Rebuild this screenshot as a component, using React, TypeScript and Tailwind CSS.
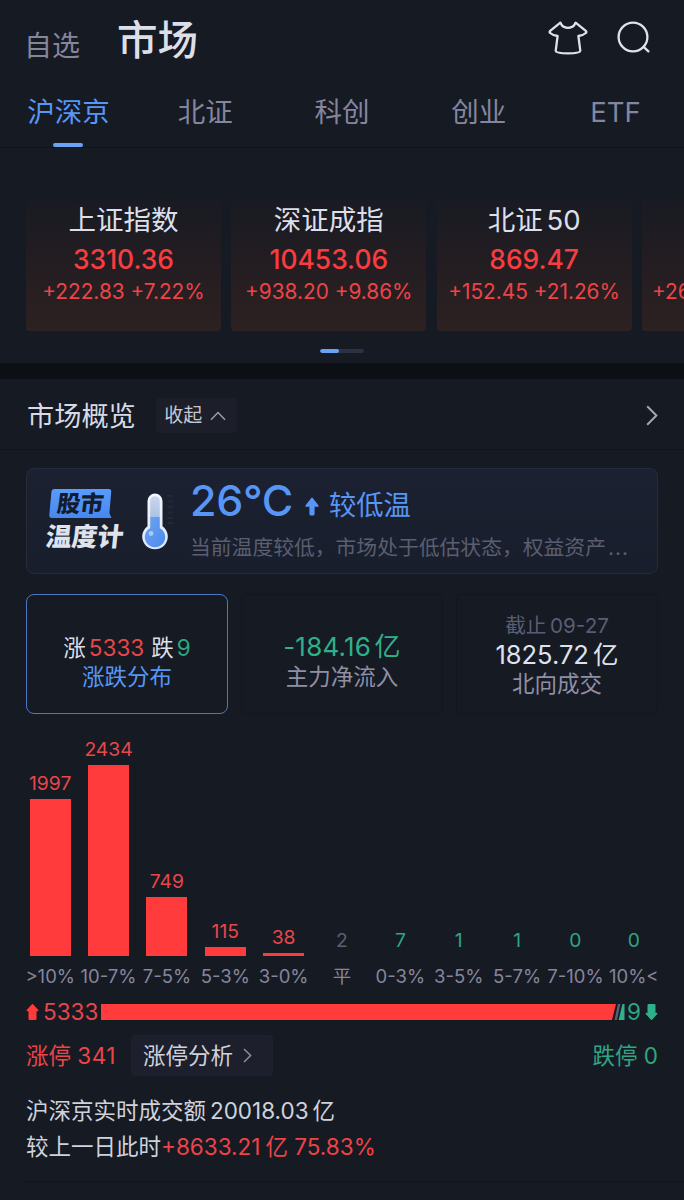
const tabs = ['沪深京', '北证', '科创', '创业', 'ETF'];

const indices = [
  { name: '上证指数', value: '3310.36', change: '+222.83', percent: '+7.22%' },
  { name: '深证成指', value: '10453.06', change: '+938.20', percent: '+9.86%' },
  { name: '北证 50', value: '869.47', change: '+152.45', percent: '+21.26%' },
  { name: '', value: '', change: '+26', percent: '' }
];

const distribution = [
  { range: '>10%', count: 1997, height: 157, color: 'text-[#e8464a]' },
  { range: '10-7%', count: 2434, height: 191, color: 'text-[#e8464a]' },
  { range: '7-5%', count: 749, height: 59, color: 'text-[#e8464a]' },
  { range: '5-3%', count: 115, height: 9, color: 'text-[#e8464a]' },
  { range: '3-0%', count: 38, height: 3, color: 'text-[#e8464a]' },
  { range: '平', count: 2, height: 0, color: 'text-[#5d5f74]' },
  { range: '0-3%', count: 7, height: 0, color: 'text-[#2fa583]' },
  { range: '3-5%', count: 1, height: 0, color: 'text-[#2fa583]' },
  { range: '5-7%', count: 1, height: 0, color: 'text-[#2fa583]' },
  { range: '7-10%', count: 0, height: 0, color: 'text-[#2fa583]' },
  { range: '10%<', count: 0, height: 0, color: 'text-[#2fa583]' }
];

function ShirtIcon() {
  return (
    <svg width="40" height="36" viewBox="0 0 40 36" fill="none" stroke="#dfe2ea" strokeWidth="2.3" strokeLinejoin="round" strokeLinecap="round">
      <path d="M12.4 2.6 L2.2 10.8 Q1 12 2.2 13 Q4.6 15.2 9.6 16 L7.7 30.8 Q8 33.2 20 33.4 Q32 33.2 32.3 30.8 L30.4 16 Q35.4 15.2 37.8 13 Q39 12 37.8 10.8 L27.6 2.6 L26.2 5.2 Q24.6 7.8 20 7.8 Q15.4 7.8 13.8 5.2 Z" />
    </svg>
  );
}

function SearchIcon() {
  return (
    <svg width="34" height="34" viewBox="0 0 34 34" fill="none" stroke="#dfe2ea" strokeWidth="2.3" strokeLinecap="round">
      <circle cx="16" cy="17" r="14.4" />
      <path d="M26.6 26.8 L31.4 31.4" />
    </svg>
  );
}

function Thermometer() {
  return (
    <svg width="38" height="60" viewBox="0 0 38 60" fill="none">
      <defs>
        <linearGradient id="glass" x1="0" y1="0" x2="0" y2="1">
          <stop offset="0" stopColor="#f4f7fd" />
          <stop offset="1" stopColor="#dbe7fb" />
        </linearGradient>
        <linearGradient id="tube" x1="0" y1="0" x2="0" y2="1">
          <stop offset="0" stopColor="#c9d6ee" />
          <stop offset="1" stopColor="#9fb6de" />
        </linearGradient>
        <linearGradient id="liquid" x1="0" y1="0" x2="1" y2="1">
          <stop offset="0" stopColor="#6da4f3" />
          <stop offset="1" stopColor="#4c8bec" />
        </linearGradient>
      </defs>
      <path d="M27 4 H33 M28 9.5 H33 M27 15 H33 M28 20.5 H33 M27 26 H33 M28 31 H33" stroke="#242937" strokeWidth="1.8" />
      <path d="M7.5 9 a7.5 7.5 0 0 1 15 0 V34.2 a12.8 12.8 0 1 1 -15 0 Z" fill="url(#glass)" />
      <path d="M10.2 9 a4.8 4.8 0 0 1 9.6 0 V36 H10.2 Z" fill="url(#tube)" />
      <path d="M10.4 25 H19.6 V36 a10.2 10.2 0 1 1 -9.2 0 Z" fill="url(#liquid)" />
      <circle cx="11" cy="41.5" r="2.4" fill="#a9cbfb" />
    </svg>
  );
}

function ArrowUp({ className }: { className: string }) {
  return (
    <svg className={className} viewBox="0 0 14 18" fill="currentColor">
      <path d="M6.3 .4 Q7 -.2 7.7 .4 L13.6 8 Q14 9.2 12.8 9.2 H9.6 V16.6 Q9.6 18 8.4 18 H5.6 Q4.4 18 4.4 16.6 V9.2 H1.2 Q0 9.2 .4 8 Z" />
    </svg>
  );
}

function BlockArrow({ className }: { className: string }) {
  return (
    <svg className={className} viewBox="0 0 12 16" fill="currentColor">
      <path d="M5.4 .3 Q6 -.2 6.6 .3 L11.8 6 Q12.3 7 11.2 7.2 H10 V14.8 Q10 16 8.8 16 H3.2 Q2 16 2 14.8 V7.2 H.8 Q-.3 7 .2 6 Z" />
    </svg>
  );
}

function Header() {
  return (
    <header className="flex h-[78px] pl-[24px] pr-[33px]">
      <span className="mt-[30px] text-[28px] leading-8 text-[#85859c]">自选</span>
      <h1 className="ml-[37px] mt-[17px] text-[40.5px] font-medium leading-[48px] text-[#dcdfe8]">市场</h1>
      <div className="ml-auto mt-[20px] flex gap-[29px]">
        <ShirtIcon />
        <SearchIcon />
      </div>
    </header>
  );
}

function Tabs() {
  return (
    <nav className="grid h-[70px] grid-cols-5 border-b border-[#10141b]">
      {tabs.map((tab, index) => (
        <div key={tab} className="flex flex-col items-center">
          <span className={index === 0 ? 'mt-[16px] text-[27.5px] leading-9 text-[#5896f5]' : 'mt-[16px] text-[27.5px] leading-9 text-[#85859f]'}>
            {tab}
          </span>
          {index === 0 && <span className="mt-[13px] h-1 w-[30px] rounded-sm bg-[#6aa2f5]" />}
        </div>
      ))}
    </nav>
  );
}

function IndexCards() {
  return (
    <section className="h-[215px] overflow-hidden pt-[47px]">
      <div className="flex gap-[10.3px] pl-[26px]">
        {indices.map((item, index) => (
          <div
            key={index}
            className="flex h-[136px] w-[195px] shrink-0 flex-col items-center whitespace-nowrap rounded bg-linear-to-b from-[#181a23] via-[#231d21] to-[#2d2121] pt-[8px]"
          >
            <div className="h-[36px] text-[27.5px] leading-[35px] text-[#dcdfea] [word-spacing:-4px]">{item.name}</div>
            <div className="h-[38px] text-[26.4px] font-medium leading-[40px] text-[#f83c40]">{item.value}</div>
            <div className={item.name ? 'text-[20.8px] leading-[30px] text-[#ee4347]' : 'w-full pl-[10px] text-[20.8px] leading-[30px] text-[#ee4347]'}>
              {item.change} {item.percent}
            </div>
          </div>
        ))}
      </div>
      <div className="mx-auto mt-[18px] flex h-[4px] w-[44px] overflow-hidden rounded-full bg-[#2d3144]">
        <span className="w-[19px] rounded-full bg-[#6aa2f5]" />
      </div>
    </section>
  );
}

function OverviewHeader() {
  return (
    <div className="flex h-[71px] items-center border-b border-[#10141b] pl-[27px] pr-[26px] pt-[3px]">
      <h2 className="mt-[2px] text-[27.2px] leading-9 text-[#d8dbe5]">市场概览</h2>
      <button className="ml-[20px] flex h-[35px] w-[81px] items-center justify-center gap-[8px] rounded bg-[#1c1f2a] pr-[2px] text-[19px] text-[#c6c9d4]">
        <span className="mt-px">收起</span>
        <svg width="16" height="10" viewBox="0 0 16 10" fill="none" stroke="#9a9dab" strokeWidth="1.5">
          <path d="M1 8.8 L8 1.6 L15 8.8" />
        </svg>
      </button>
      <svg className="ml-auto" width="12" height="21" viewBox="0 0 12 21" fill="none" stroke="#a3a6b1" strokeWidth="2">
        <path d="M1.2 1.2 L10.4 10.5 L1.2 19.8" />
      </svg>
    </div>
  );
}

function TemperatureCard() {
  return (
    <div className="mx-[26px] mt-[18px] flex h-[106px] rounded-lg border border-[#262b3a] bg-linear-to-b from-[#1b2130] to-[#191e2d] pl-[19px]">
      <div className="w-[88px] pt-[20px]">
        <svg className="ml-[3px] h-[29px] w-[63px] overflow-visible" viewBox="0 0 63 29">
          <defs>
            <linearGradient id="badge" x1="0" y1="0" x2="0" y2="1">
              <stop offset="0" stopColor="#5a9cfb" />
              <stop offset="1" stopColor="#4688ef" />
            </linearGradient>
          </defs>
          <path d="M5.5 0 H59.5 Q62.5 0 62.2 3 L60.4 24 L62.5 29 H3 Q0 29 .3 26 L2.4 3 Q2.7 0 5.5 0 Z" fill="url(#badge)" />
          <text x="9" y="22.5" fontSize="23.2" fontWeight="900" fill="#131b2d" transform="skewX(-7) translate(1 0)">
            股市
          </text>
        </svg>
        <div className="mt-[3px] w-[80px] -skew-x-6 whitespace-nowrap text-[25.8px] font-black leading-[32px] text-[#dfe3ed]">温度计</div>
      </div>
      <div className="mt-[23px] w-[56px] pl-[6px]">
        <Thermometer />
      </div>
      <div>
        <div className="flex h-[62px] items-center text-[#5896f5]">
          <span className="text-[43px] font-medium leading-[62px] tracking-[-0.3px]">26°C</span>
          <ArrowUp className="ml-[12px] mt-[13px] h-[19px] w-[14px]" />
          <span className="ml-[10px] mt-[12px] text-[27.3px]">较低温</span>
        </div>
        <p className="mt-px whitespace-nowrap text-[20.8px] leading-[32px] text-[#5b5e70]">
          当前温度较低，市场处于低估状态，权益资产<span className="ml-[2px] tracking-[1px]">...</span>
        </p>
      </div>
    </div>
  );
}

function SummaryCards() {
  return (
    <div className="mx-[26px] mt-[20px] grid h-[120px] grid-cols-3 gap-[13px] text-center">
      <div className="rounded-lg border border-[#4b78c4] pt-[39px]">
        <div className="flex justify-center text-[22.5px] leading-[28px] text-[#dcdfe8]">
          <span>涨</span>
          <span className="ml-[3px] text-[#e8464a]">5333</span>
          <span className="ml-[7px]">跌</span>
          <span className="ml-[3px] text-[#2fa583]">9</span>
        </div>
        <div className="text-[22.5px] leading-[29px] text-[#5896f5]">涨跌分布</div>
      </div>
      <div className="rounded border border-[#12161e] pt-[36px]">
        <div className="text-[26px] leading-[31px] tracking-[0.2px] text-[#2fb08b] [word-spacing:-4px]">-184.16 亿</div>
        <div className="text-[22.5px] leading-[29px] text-[#8f8fa6]">主力净流入</div>
      </div>
      <div className="rounded border border-[#12161e] pt-[17px]">
        <div className="text-[20.6px] leading-[28px] text-[#5b5d73] [word-spacing:-2px]">截止 09-27</div>
        <div className="text-[25.5px] leading-[30px] text-[#dfe2ec] [word-spacing:-3px]">1825.72 亿</div>
        <div className="text-[22.5px] leading-[28px] text-[#8f8fa6]">北向成交</div>
      </div>
    </div>
  );
}

function Distribution() {
  return (
    <div className="mx-[21px] mt-[20px]">
      <div className="grid h-[222px] grid-cols-11 items-end">
        {distribution.map((item) => (
          <div key={item.range} className="flex flex-col items-center">
            <span className={item.color + ' mb-[4px] text-[19.3px] leading-6'}>{item.count}</span>
            <div className="w-[41px] bg-[#ff3b3b]" style={{ height: item.height }} />
          </div>
        ))}
      </div>
      <div className="mt-[7px] grid grid-cols-11">
        {distribution.map((item) => (
          <span key={item.range} className="flex justify-center whitespace-nowrap text-[18.5px] leading-[26px] text-[#85869d]">
            {item.range}
          </span>
        ))}
      </div>
    </div>
  );
}

function RatioBar() {
  return (
    <div className="mx-[26px] mt-[11px] flex h-[24px] items-center">
      <BlockArrow className="h-[16px] w-[13px] text-[#ff3b3b]" />
      <span className="ml-[4px] w-[58px] text-[22.5px] leading-6 text-[#e8464a]">5333</span>
      <div className="h-[16px] flex-1 bg-[#ff3b3b] [clip-path:polygon(0_0,100%_0,calc(100%-4px)_100%,0_100%)]" />
      <svg className="-ml-[2px]" width="11" height="16" viewBox="0 0 11 16">
        <path d="M4 0 H6.4 L2.9 16 H.5 Z" fill="#5d5f74" />
        <path d="M8.4 0 H10.5 V16 H4.6 Z" fill="#2fb08b" />
      </svg>
      <span className="ml-px w-[16px] text-center text-[22.5px] leading-6 text-[#2fa583]">9</span>
      <BlockArrow className="ml-[3px] h-[16px] w-[13px] rotate-180 text-[#2fb08b]" />
    </div>
  );
}

function Turnover() {
  return (
    <>
      <div className="mx-[26px] mt-[11px] flex h-[41px] items-center text-[22.5px]">
        <span className="w-[105px] text-[#ee4347]">涨停 <span className="tracking-[0.4px]">341</span></span>
        <button className="flex h-[41px] w-[142px] items-center rounded-sm bg-[#1d202c] pl-[12px] text-[#cfd2dc]">
          涨停分析
          <svg className="ml-[10px]" width="9" height="15" viewBox="0 0 9 15" fill="none" stroke="#8b8e9d" strokeWidth="1.5">
            <path d="M1 1 L7.6 7.5 L1 14" />
          </svg>
        </button>
        <span className="ml-auto text-[#2fa583]">跌停 0</span>
      </div>
      <div className="ml-[26px] border-b border-[#10141b] pb-[16px] pt-[17px] text-[22.5px] leading-[36px] text-[#cfd2dc]">
        <p className="[word-spacing:-2.4px]">沪深京实时成交额 20018.03 亿</p>
        <p>
          较上一日此时<span className="text-[#ee4347]">+8633.21<span className="ml-[5px]">亿</span> 75.83%</span>
        </p>
      </div>
    </>
  );
}

export default function App() {
  return (
    <main className="h-[1200px] w-[684px] overflow-hidden bg-[#161a23] font-['Inter','Noto_Sans_CJK_SC',sans-serif]" lang="zh-CN">
      <Header />
      <Tabs />
      <IndexCards />
      <div className="h-[16px] bg-[#0c0f14]" />
      <OverviewHeader />
      <TemperatureCard />
      <SummaryCards />
      <Distribution />
      <RatioBar />
      <Turnover />
    </main>
  );
}
